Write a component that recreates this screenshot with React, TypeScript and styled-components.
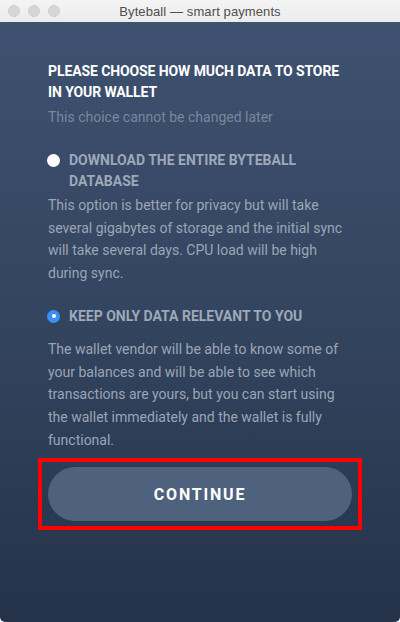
import React, { useState } from "react";
import styled, { createGlobalStyle } from "styled-components";

const Global = createGlobalStyle`
  html, body { margin: 0; padding: 0; background: #ffffff; }
  * { box-sizing: border-box; }
`;

const Window = styled.div`
  width: 400px;
  height: 622px;
  display: flex;
  flex-direction: column;
  font-family: Roboto, "Liberation Sans", sans-serif;
`;

const TitleBar = styled.div`
  height: 22px;
  flex: 0 0 22px;
  background: linear-gradient(#f4f4f4, #ececec);
  position: relative;
  display: flex;
  align-items: center;
  justify-content: center;
`;

const Lights = styled.div`
  position: absolute;
  left: 8px;
  top: 5px;
  display: flex;
  gap: 8px;
`;

const Light = styled.span`
  width: 12px;
  height: 12px;
  border-radius: 50%;
  background: #d6d6d6;
  border: 1px solid #cfcfcf;
`;

const Title = styled.div`
  font-family: "Liberation Sans", Arial, sans-serif;
  font-size: 13px;
  color: #4f4f4f;
  letter-spacing: 0.1px;
`;

const Body = styled.div`
  flex: 1;
  background: linear-gradient(180deg, #3e5170 0%, #33445f 50%, #243349 100%);
  border-radius: 0 0 5px 5px;
  padding: 39px 48px 0 48px;
  display: flex;
  flex-direction: column;
`;

const Heading = styled.h1`
  margin: 0;
  font-size: 14px;
  line-height: 21px;
  font-weight: 700;
  color: #ffffff;
  text-transform: uppercase;
  letter-spacing: -0.1px;
`;

const Sub = styled.p`
  margin: 4px 0 0 0;
  font-size: 14px;
  line-height: 21px;
  color: #7a879c;
`;

const Option = styled.div<{ $top: number }>`
  margin-top: ${(p) => p.$top}px;
  display: flex;
  flex-direction: column;
`;

const OptionHead = styled.label`
  display: flex;
  align-items: flex-start;
  cursor: pointer;
`;

const Radio = styled.span<{ $on: boolean }>`
  flex: 0 0 13px;
  width: 13px;
  height: 13px;
  margin: 4px 9px 0 -1px;
  border-radius: 50%;
  background: ${(p) => (p.$on ? "#3a8ff5" : "#ffffff")};
  display: flex;
  align-items: center;
  justify-content: center;
  &::after {
    content: "";
    width: 4px;
    height: 4px;
    border-radius: 50%;
    background: #ffffff;
    display: ${(p) => (p.$on ? "block" : "none")};
  }
`;

const OptionLabel = styled.span`
  font-size: 14px;
  line-height: 21px;
  font-weight: 700;
  color: #9ea8b8;
  text-transform: uppercase;
`;

const Desc = styled.p<{ $top: number }>`
  margin: ${(p) => p.$top}px 0 0 0;
  font-size: 14px;
  line-height: 22.7px;
  color: #9ba5b5;
`;

const Highlight = styled.div`
  margin: 7px -10px 0 -10px;
  border: 4px solid #ff0000;
  padding: 5px 6px;
`;

const Button = styled.button`
  width: 100%;
  height: 54px;
  border: none;
  border-radius: 27px;
  background: #4e627d;
  color: #ffffff;
  font-family: Roboto, "Liberation Sans", sans-serif;
  font-weight: 700;
  font-size: 16px;
  letter-spacing: 1.8px;
  cursor: pointer;
`;

export default function App() {
  const [choice, setChoice] = useState<"full" | "light">("light");
  return (
    <>
      <Global />
      <Window>
        <TitleBar>
          <Lights>
            <Light />
            <Light />
            <Light />
          </Lights>
          <Title>Byteball — smart payments</Title>
        </TitleBar>
        <Body>
          <Heading>Please choose how much data to store in your wallet</Heading>
          <Sub>This choice cannot be changed later</Sub>
          <Option $top={22}>
            <OptionHead onClick={() => setChoice("full")}>
              <Radio $on={choice === "full"} />
              <OptionLabel>Download the entire Byteball database</OptionLabel>
            </OptionHead>
            <Desc $top={2}>
              This option is better for privacy but will take several gigabytes of storage and the
              initial sync will take several days. CPU load will be high during sync.
            </Desc>
          </Option>
          <Option $top={21}>
            <OptionHead onClick={() => setChoice("light")}>
              <Radio $on={choice === "light"} />
              <OptionLabel>Keep only data relevant to you</OptionLabel>
            </OptionHead>
            <Desc $top={11}>
              The wallet vendor will be able to know some of your balances and will be able to see
              which transactions are yours, but you can start using the wallet immediately and the
              wallet is fully functional.
            </Desc>
          </Option>
          <Highlight>
            <Button>CONTINUE</Button>
          </Highlight>
        </Body>
      </Window>
    </>
  );
}
